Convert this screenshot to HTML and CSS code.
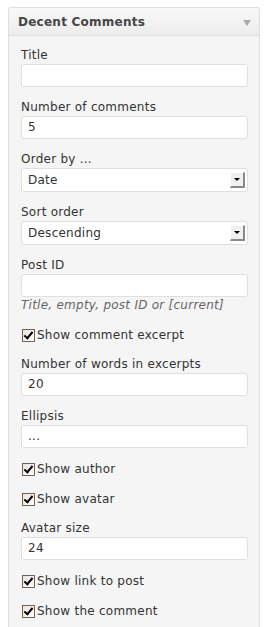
FILE: index.html
```html
<!DOCTYPE html>
<html>
<head>
<meta charset="utf-8">
<link rel="stylesheet" href="styles.css">
</head>
<body>
<div class="widget">
  <div class="widget-top">
    <h3 class="widget-title">Decent Comments</h3>
    <span class="toggle"></span>
  </div>
  <div class="widget-inside">
    <div class="field">
      <label class="lbl">Title</label>
      <div class="input"></div>
    </div>
    <div class="field">
      <label class="lbl">Number of comments</label>
      <div class="input">5</div>
    </div>
    <div class="field">
      <label class="lbl">Order by ...</label>
      <div class="select"><span>Date</span><span class="sel-btn"></span></div>
    </div>
    <div class="field">
      <label class="lbl">Sort order</label>
      <div class="select"><span>Descending</span><span class="sel-btn"></span></div>
    </div>
    <div class="field">
      <label class="lbl">Post ID</label>
      <div class="input"></div>
      <div class="hint">Title, empty, post ID or [current]</div>
    </div>
    <div class="check"><span class="cb"></span>Show comment excerpt</div>
    <div class="field">
      <label class="lbl">Number of words in excerpts</label>
      <div class="input">20</div>
    </div>
    <div class="field">
      <label class="lbl">Ellipsis</label>
      <div class="input">...</div>
    </div>
    <div class="check"><span class="cb"></span>Show author</div>
    <div class="check"><span class="cb"></span>Show avatar</div>
    <div class="field">
      <label class="lbl">Avatar size</label>
      <div class="input">24</div>
    </div>
    <div class="check"><span class="cb"></span>Show link to post</div>
    <div class="check"><span class="cb"></span>Show the comment</div>
  </div>
</div>
</body>
</html>
```
FILE: styles.css
```css
html, body {
  margin: 0;
  padding: 0;
  background: #fff;
}
body {
  padding: 7px 8px 0 8px;
  font-family: "DejaVu Sans", Verdana, sans-serif;
  font-size: 12px;
  letter-spacing: 0.25px;
  color: #333;
}
.widget {
  border: 1px solid #dfdfdf;
  border-bottom: none;
  border-radius: 3px 3px 0 0;
  background: #f5f5f5;
  height: 640px;
}
.widget-top {
  height: 27px;
  border-bottom: 1px solid #dfdfdf;
  background: linear-gradient(to bottom, #f9f9f9, #ececec);
  display: flex;
  align-items: center;
  justify-content: space-between;
  padding: 0 8px 0 9px;
  border-radius: 3px 3px 0 0;
}
.widget-title {
  margin: 0;
  font-size: 12px;
  font-weight: bold;
  color: #464646;
}
.toggle {
  width: 0;
  height: 0;
  border-left: 4px solid transparent;
  border-right: 4px solid transparent;
  border-top: 6px solid #aaa;
  margin-top: 2px;
}
.widget-inside {
  padding: 11px 11px 0 12px;
}
.field {
  margin-bottom: 12px;
}
.lbl {
  display: block;
  line-height: 17px;
  height: 17px;
}
.input, .select {
  box-sizing: border-box;
  height: 23px;
  background: #fff;
  border: 1px solid #dfdfdf;
  border-radius: 3px;
  padding: 0 6px;
  line-height: 21px;
  font-size: 12px;
  color: #333;
}
.select {
  height: 24px;
  line-height: 22px;
  display: flex;
  justify-content: space-between;
  align-items: center;
  padding: 0 2px 0 6px;
}
.sel-btn {
  box-sizing: border-box;
  width: 15px;
  height: 16px;
  background: #f0f0f0;
  border-top: 1px solid #fff;
  border-left: 1px solid #fff;
  border-right: 2px solid #8a8a8a;
  border-bottom: 2px solid #8a8a8a;
  position: relative;
}
.sel-btn::after {
  content: "";
  position: absolute;
  left: 3px;
  top: 5px;
  border-left: 3px solid transparent;
  border-right: 3px solid transparent;
  border-top: 3px solid #000;
}
.hint {
  font-style: italic;
  color: #666;
  line-height: 17px;
}
.check {
  display: flex;
  align-items: center;
  height: 18px;
  margin-bottom: 12px;
  padding-left: 1px;
}
.cb {
  box-sizing: border-box;
  width: 13px;
  height: 13px;
  border: 1px solid #6f6559;
  background: linear-gradient(135deg, #e8e4dc, #ffffff);
  margin-right: 2px;
  position: relative;
}
.cb::after {
  content: "";
  position: absolute;
  left: 3px;
  top: 0px;
  width: 3px;
  height: 7px;
  border-right: 2px solid #000;
  border-bottom: 2px solid #000;
  transform: rotate(40deg);
}
```
